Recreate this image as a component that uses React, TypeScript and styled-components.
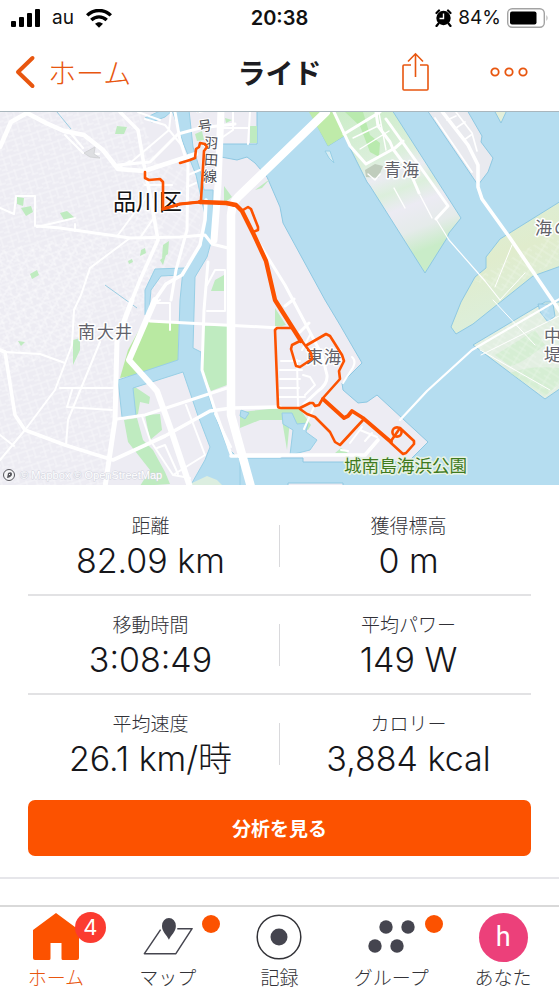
import React from "react";
import styled, { createGlobalStyle } from "styled-components";

const ORANGE = "#fc5200";
const LINK = "#e8560f";
const INK = "#45454f";
const JP = '"Noto Sans CJK JP", sans-serif';

const GlobalStyle = createGlobalStyle`
  * { box-sizing: border-box; }
  body { margin: 0; background: #fff; color: #16161a; font-family: Inter, ${JP}; }
`;

const Screen = styled.div`
  display: flex;
  flex-direction: column;
  min-height: 100vh;
`;

const StatusBar = styled.div`
  display: grid;
  grid-template-columns: 1fr auto 1fr;
  align-items: center;
  height: 36px;
  padding: 0 10px;
  font-size: 19px;
  line-height: 24px;
  color: #111;
`;

const StatusGroup = styled.div<{ $end?: boolean }>`
  display: flex;
  align-items: center;
  justify-content: ${(p) => (p.$end ? "flex-end" : "flex-start")};
  gap: ${(p) => (p.$end ? "6px" : "12px")};
`;

const Clock = styled.time`
  font-weight: 600;
  font-size: 20px;
`;

const Header = styled.header`
  display: grid;
  grid-template-columns: 1fr auto 1fr;
  align-items: center;
  height: 76px;
  padding: 0 14px 4px;
  border-bottom: 1px solid #a9b6bd;
`;

const BackLink = styled.a`
  display: flex;
  align-items: center;
  gap: 12px;
  color: ${LINK};
  font: 300 28px/36px ${JP};
  text-decoration: none;
`;

const Title = styled.h1`
  margin: 0;
  font: 700 28px/36px ${JP};
  color: #1d1d22;
`;

const HeaderActions = styled.div`
  display: flex;
  align-items: center;
  justify-content: flex-end;
  gap: 61px;
  padding-right: 17px;
`;

const IconButton = styled.button`
  display: flex;
  padding: 0;
  border: 0;
  background: none;
  color: ${LINK};
  cursor: pointer;
`;

const MapSvg = styled.svg`
  display: block;
  width: 100%;
  height: auto;
  font-family: ${JP};
`;

const Stats = styled.dl`
  margin: 12px 28px 8px;
`;

const StatRow = styled.div`
  display: grid;
  grid-template-columns: 1fr 1px 1fr;
  column-gap: 6px;
  align-items: center;
  height: 99px;
  border-bottom: 2px solid #e2e2e4;
  &:last-child {
    height: 97px;
    border-bottom: 0;
  }
`;

const StatDivider = styled.span`
  height: 42px;
  background: #d9d9dc;
`;

const Stat = styled.div`
  display: flex;
  flex-direction: column;
  align-items: center;
  gap: 2px;
  padding-top: 4px;
`;

const StatLabel = styled.dt`
  font: 300 19px/24px ${JP};
  color: #303036;
`;

const StatValue = styled.dd`
  margin: 0;
  font: 300 34px/44px Inter, ${JP};
`;

const AnalyzeButton = styled.button`
  height: 56px;
  margin: 0 28px 21px;
  border: 0;
  border-radius: 7px;
  background: ${ORANGE};
  color: #fff;
  font: 700 19px/24px ${JP};
  cursor: pointer;
`;

const Rule = styled.hr`
  width: 100%;
  margin: 0;
  border: 0;
  border-top: 2px solid #e6e6ea;
`;

const TabBar = styled.nav`
  display: grid;
  grid-template-columns: repeat(5, 1fr);
  height: 87px;
  margin-top: auto;
  border-top: 2px solid #d9d9d9;
`;

const Tab = styled.a<{ $active?: boolean }>`
  display: flex;
  flex-direction: column;
  align-items: center;
  gap: 2px;
  padding-top: 5px;
  color: ${(p) => (p.$active ? LINK : "#333338")};
  font: 300 19px/26px ${JP};
  text-decoration: none;
`;

const TabIcon = styled.span`
  position: relative;
  display: flex;
  align-items: center;
  justify-content: center;
  width: 50px;
  height: 50px;
`;

const CountBadge = styled.span`
  position: absolute;
  top: 0;
  right: -25px;
  width: 31px;
  height: 31px;
  border-radius: 50%;
  background: #fb3b30;
  color: #fff;
  text-align: center;
  font: 400 22px/31px Inter, sans-serif;
`;

const DotBadge = styled.span`
  position: absolute;
  top: 3px;
  right: -27px;
  width: 18px;
  height: 18px;
  border-radius: 50%;
  background: ${ORANGE};
`;

const Avatar = styled.span`
  width: 49px;
  height: 49px;
  border-radius: 50%;
  background: #ec407a;
  color: #fff;
  text-align: center;
  font: 400 27px/48px Roboto, sans-serif;
`;

const SignalIcon = () => (
  <svg width="30" height="20" viewBox="0 0 30 20" aria-hidden="true">
    <rect x="1" y="13" width="5" height="6" rx="1" />
    <rect x="9" y="9" width="5" height="10" rx="1" />
    <rect x="17" y="5" width="5" height="14" rx="1" />
    <rect x="25" y="1" width="5" height="18" rx="1" />
  </svg>
);

const WifiIcon = () => (
  <svg width="26" height="19" viewBox="0 0 26 19" fill="none" stroke="#000" strokeWidth="3.4" aria-hidden="true">
    <path d="M1.2 6.4C8-.2 18-.2 24.8 6.4" />
    <path d="M5.3 11c4.5-4.2 10.900-4.200 15.400 0" />
    <path d="M9 14.800c2.500-2.200 5.500-2.200 8 0L13 18.800z" fill="#000" stroke="none" />
  </svg>
);

const AlarmIcon = () => (
  <svg width="17" height="18" viewBox="0 0 17 18" aria-hidden="true">
    <circle cx="8.5" cy="9" r="7.2" />
    <path d="M1.500 4 4 1.500M15.500 4 13 1.500M3.500 14.500 1.500 17M13.500 14.500l2 2.500" stroke="#000" strokeWidth="2.200" strokeLinecap="round" />
    <path d="M8.5 4.500V9.500H4.500" stroke="#fff" strokeWidth="1.400" fill="none" />
  </svg>
);

const BatteryIcon = () => (
  <svg width="42" height="20" viewBox="0 0 42 20" aria-hidden="true">
    <rect x=".7" y=".7" width="36.600" height="18.600" rx="4.500" fill="#fff" stroke="#a3a3a3" strokeWidth="1.400" />
    <rect x="3" y="3.500" width="26.500" height="13" rx="2" />
    <path d="M39.500 7q2 3 0 6z" fill="#a3a3a3" />
  </svg>
);

const BackIcon = () => (
  <svg width="22" height="34" viewBox="0 0 22 34" fill="none" stroke={LINK} strokeWidth="4" strokeLinecap="round" strokeLinejoin="round" aria-hidden="true">
    <path d="M18.500 3 4 17l14.500 14" />
  </svg>
);

const ShareIcon = () => (
  <svg width="27" height="39" viewBox="0 0 27 39" fill="none" stroke={LINK} strokeWidth="1.600" aria-hidden="true">
    <path d="M9 13H2a1 1 0 0 0-1 1v23a1 1 0 0 0 1 1h23a1 1 0 0 0 1-1V14a1 1 0 0 0-1-1h-7M13.500 25V2M6 9.500 13.500 1.800 21 9.500" />
  </svg>
);

const MoreIcon = () => (
  <svg width="38" height="10" viewBox="0 0 38 10" fill="none" stroke={LINK} strokeWidth="1.800" aria-hidden="true">
    <circle cx="5" cy="5" r="3.700" />
    <circle cx="19" cy="5" r="3.700" />
    <circle cx="33" cy="5" r="3.700" />
  </svg>
);

const HomeIcon = () => (
  <svg width="46" height="48" viewBox="0 0 46 48" fill={ORANGE} aria-hidden="true">
    <path d="M23 0 46 17v28q0 2-2 2H30q-1.500 0-1.500-1.500V30h-11v15.500q0 1.500-1.500 1.500H2q-2 0-2-2V17z" />
  </svg>
);

const MapTabIcon = () => (
  <svg width="54" height="42" viewBox="0 0 54 42" fill="none" aria-hidden="true">
    <path d="M19 13 1.500 39h34L53 12H37" stroke={INK} strokeWidth="1.600" strokeLinejoin="round" />
    <path d="M28 24c-2-5-7.500-8.500-7.500-15a7.500 8.500 0 0 1 15 0c0 6.500-5.500 10-7.500 15z" fill={INK} />
  </svg>
);

const RecordIcon = () => (
  <svg width="46" height="46" viewBox="0 0 46 46" aria-hidden="true">
    <circle cx="23" cy="23" r="21.800" fill="none" stroke="#333338" strokeWidth="1.500" />
    <circle cx="23" cy="23" r="8.500" fill={INK} />
  </svg>
);

const GroupsIcon = () => (
  <svg width="48" height="34" viewBox="0 0 48 34" fill={INK} aria-hidden="true">
    <circle cx="19" cy="7" r="6.700" />
    <circle cx="41" cy="7" r="6.700" />
    <circle cx="8" cy="26" r="6.700" />
    <circle cx="30" cy="26" r="6.700" />
  </svg>
);

const RideMap = () => (
  <MapSvg viewBox="0 112 559 373" role="img" aria-label="ライドのルート地図">
    <defs>
      <pattern id="blocks" width="17" height="15" patternUnits="userSpaceOnUse" patternTransform="rotate(-18)">
        <path d="M0 2H17M0 8H10M5 2V15M12 0V11M10 11H17M0 13H5" stroke="#fff" strokeWidth=".8" fill="none" />
      </pattern>
      <pattern id="lots" width="12" height="11" patternUnits="userSpaceOnUse" patternTransform="rotate(32)">
        <path d="M0 2H12M4 0V11M0 8H8" stroke="#fff" strokeWidth=".7" fill="none" />
      </pattern>
      <linearGradient id="aomi" x1="0" y1="0" x2=".35" y2="1">
        <stop offset="0" stopColor="#c9edc5" />
        <stop offset=".42" stopColor="#dcefdc" />
        <stop offset=".52" stopColor="#ebecf2" />
        <stop offset=".62" stopColor="#dcefdc" />
        <stop offset=".73" stopColor="#ecebf3" />
        <stop offset=".87" stopColor="#e5ebea" />
        <stop offset="1" stopColor="#c9ecc8" />
      </linearGradient>
      <linearGradient id="outer" x1="0" y1="0" x2=".3" y2="1">
        <stop offset="0" stopColor="#dcefd8" />
        <stop offset=".5" stopColor="#e0eccd" />
        <stop offset="1" stopColor="#dcefdc" />
      </linearGradient>
    </defs>

    <rect y="112" width="559" height="373" fill="#b5ddf0" />

    <g stroke="#8ec8e2" strokeWidth="1">
      <path d="M-2 110H257V144H221V157L237 160 247 157 255 163 267 177 280 207 283 223 325 300 340 325 362 363 342 383 343 390 358 403 367 402 377 395 428 442 408 462H303V458H240L190 490H-2Z" fill="#edecf3" />
      <path d="M309 110 328 146 344 136 367 182 370 186 425 273 447 238 449 233 461 218 392 110Z" fill="url(#aomi)" />
      <path d="M427 110 478 185 488 172 493 158 481 142 482 136 467 110Z" fill="#e9eaef" />
      <path d="M494 110 501 123 507 110Z" fill="#e3efda" />
      <path d="M561 201 500 239 486 257 486 268 475 277 461 302 451 327 456 334 473 324 533 276 561 266Z" fill="url(#outer)" />
      <path d="M473 345 545 302H561V388L545 399Z" fill="#e3efe2" />
      <path d="M538 304 553 304 555 316 548 322 540 312Z" fill="#b5ddf0" />
      <path d="M288 487V483H343V487Z" fill="#edecf3" />
    </g>

    <g fill="#cdedcb" opacity=".6">
      <path d="M495 355Q520 340 535 330L545 345Q520 365 510 366ZM510 373Q530 365 559 368V384L545 396Z" />
    </g>

    <path d="M0 112H140L160 170 163 230 150 300 115 350 112 440 105 487H0Z" fill="url(#blocks)" opacity=".6" />
    <path d="M140 160 200 170 200 240 150 300 120 310ZM0 250 110 230 90 330 0 380Z" fill="url(#lots)" opacity=".6" />
    <path d="M475 345 545 303 559 320V386L545 397ZM474 280 559 230V260L500 292Z" fill="url(#lots)" opacity=".4" />

    <g fill="#bfebc0">
      <path d="M117 126 127 127 124 134 115 134ZM17 197 24 198 23 206 17 204ZM21 208 31 206 33 212 26 216ZM60 213 67 211 75 218 64 220ZM30 274 37 270 39 275 32 279ZM141 250 145 248 146 253 140 256ZM163 245 169 241 168 254 162 258ZM160 260 166 255 163 265ZM128 261 132 259 133 262 129 264Z" />
      <path d="M195 134 202 131 204 140 197 141ZM224 186 232 197 224 203ZM255 190 270 179 262 188ZM215 280 224 275 224 291 211 291Z" />
      <path d="M250 126H257V143H250ZM225 118 232 120 226 123ZM73 340 80 338 80 350 73 365ZM18 341 25 342 21 346ZM275 308 286 325 275 328Z" />
      <path d="M203 326 227 325V385L211 391 202 372Z" />
      <path d="M132 385 150 397 149 404 140 402 138 414 134 417ZM124 420 137 418 143 440 153 450 165 472 170 484 140 486 150 470 128 442ZM145 415 160 414 162 430 150 440Z" />
      <path d="M240 412 280 408 300 409 311 425 308 430 290 420 287 450 282 420 260 420 240 428Z" />
      <path d="M205 482 216 478 222 484ZM335 453 341 448 348 453Z" />
    </g>
    <path d="M144 321 179 322 178 360 140 374 120 378 128 350Z" fill="#b9e9a2" />
    <path d="M309 112 328 146 344 136 334 112Z" fill="#bfeba9" />
    <path d="M345 112 363 112 370 135 380 143 379 157 370 152 360 126Z" fill="#b9eaae" />
    <path d="M365 170 375 164 383 166 378 178 366 177Z" fill="#c0cdbd" />

    <g fill="#b5ddf0" stroke="#98cfe6" strokeWidth="1">
      <path d="M172 110H189L193 147 200 170 204 190H213V235L207 257 195 277 193 348 201 352 202 372 213 410 227 447 240 460V490H188L205 460 210 447 197 413 183 372 133 388 136 416 122 417 118 380 178 360 180 300 183 270 202 243 205 215 196 175 184 145Z" />
      <path d="M145 118 160 111H172L165 117 152 122Z" />
      <path d="M145 315 145 290 155 269 184 268 182 275 161 276 151 290 149 312Z" />
      <path d="M282 413 292 413 297 424 308 423 306 432 317 440 310 450 290 455 293 430 283 424Z" />
      <path d="M241 410 249 413 245 419 240 416Z" />
      <path d="M325 151 330 151 334 163 329 158Z" fill="#d8edf3" />
    </g>
    <path d="M192 487V483L207 476 217 480 224 487Z" fill="#dceee0" />
    <path d="M57 112 71 129M105 285 137 308" stroke="#9bcde2" fill="none" />

    <g fill="none" stroke="#fff" strokeLinejoin="round" strokeLinecap="round">
      <path d="M326 112 238 197Q232 203 231 215V415L251 487" strokeWidth="8.5" />
      <path d="M221 110 218 185 214 240" strokeWidth="7" />
      <path d="M0 147 11 122 27 113 46 123 64 131 84 135 103 150 118 169 144 171 196 154" strokeWidth="4.5" />
      <path d="M155 300 129 360 157 391 171 430 190 487" strokeWidth="6" />
      <path d="M132 300 117 340 115 420 105 487" strokeWidth="5" />
      <g strokeWidth="3.6">
        <path d="M120 112 138 130 144 165 151 200 158 240 140 280 130 305" />
        <path d="M118 165 150 162 178 134 200 128 235 124M175 112 180 140 188 165 187 230 176 270 171 300" strokeWidth="3" />
        <path d="M37 226 60 228 130 238 180 237 205 235 212 244 228 248" strokeWidth="3" />
        <path d="M155 300 166 284 182 275 200 245 205 220 206 200" />
        <path d="M0 350 5 352 15 415 25 430 65 445 113 460 165 436 210 411 232 408 280 407" />
        <path d="M117 419 145 415 230 387M150 321 280 328" strokeWidth="3" />
        <path d="M240 455H365L378 440M231 456H280" />
        <path d="M208 262 204 310 202 370 215 410 231 454" strokeWidth="3" />
      </g>
      <g strokeWidth="2">
        <path d="M0 208 14 214 16 196H35V226M37 227 75 218M75 224V231M65 135 83 153 99 154M68 130 83 148" />
        <path d="M130 238 90 268 81 295 74 310 72 345 55 390 25 430 0 460M0 435 14 446M5 352 40 354 65 363M60 388H113M100 342 68 420 66 445M72 390 67 407 112 410" />
        <path d="M120 167 130 161M118 235 150 192M140 238 153 219M145 185H172M160 120 138 112M145 119 165 125 183 147M171 112 169 130 130 163" />
        <path d="M187 187 196 183M200 170 188 175M204 150 233 130V112M250 112 248 144M220 128H248M232 240V210" />
        <path d="M142 416 150 440 173 475 190 478M157 448 165 445 178 474M186 405 205 455 173 475M215 414 231 447M160 300 155 303H170V330M207 311H225V270H215L207 285" />
        <path d="M280 370H302M280 379H300M280 388H299M279 397H305M281 361H300M297 360 298 407M310 335 302 350M303 375 310 377 315 385 305 395" />
        <path d="M252 232 285 285 322 355 327 375Q328 384 318 391L304 404M285 306 294 299M300 332 309 323" strokeWidth="3" />
        <path d="M314 407 304 429M360 430 377 437M362 427 350 443M341 450 348 451M352 357Q358 362 350 372L343 383M372 433 365 441" />
      </g>
      <path d="M334 112 350 146 366 164 395 148 403 141M344 134 380 112M376 112 378 126 390 142 393 149 410 172 419 193M386 119 448 206 436 219" strokeWidth="3" />
      <path d="M379 113 386 150M353 138 380 125M360 149 389 131M368 174 375 180 380 174M394 188 405 208M420 195 432 218" strokeWidth="1.4" />
      <path d="M441 110 468 145 478 165 478 187 482 199 510 238 561 313" strokeWidth="3.6" />
      <path d="M456 112 472 133 477 151M447 120 456 116M456 128 465 122M464 140 471 135M435 118 472 172" strokeWidth="1.7" />
      <path d="M400 420 427 391 472 350 561 298" strokeWidth="2.2" />
      <path d="M436 219 449 240 485 281 500 300" strokeWidth="1.2" />
      <path d="M495 287 512 245M500 300 525 273M481 355 561 315M493 300 535 345M480 350 550 390" strokeWidth="1" />
    </g>

    <path d="M84 153 95 147 94 154 100 158 90 157Z" stroke="#d3d4d7" fill="#dedfe2" />

    <g fill="#62626a" stroke="#fff" strokeWidth="3" strokeLinejoin="round" paintOrder="stroke">
      <text x="113" y="210" fontSize="23" fill="#121212">品川区</text>
      <g fontSize="17">
        <text x="78" y="338">南</text>
        <text x="97" y="338">大</text>
        <text x="115" y="338">井</text>
        <text x="384" y="176">青</text>
        <text x="402" y="176">海</text>
        <text x="306" y="363">東</text>
        <text x="324" y="363">海</text>
        <text x="535" y="234">海</text>
        <text x="554" y="234">の</text>
        <text x="544" y="342">中</text>
        <text x="544" y="361">堤</text>
      </g>
      <g fontSize="14" fill="#4d4d53" strokeWidth="2">
        <text x="197" y="116" transform="rotate(-12 203 112)">一</text>
        <text x="198" y="131" transform="rotate(-8 206 127)">号</text>
        <text x="204" y="148" transform="rotate(6 210 143)">羽</text>
        <text x="204" y="165" transform="rotate(4 210 160)">田</text>
        <text x="203" y="181">線</text>
      </g>
      <text x="344" y="472" fontSize="17.6" fill="#3f7a1e" stroke="#e8f3e4">城南島海浜公園</text>
    </g>

    <g fill="none" stroke={ORANGE} strokeWidth="2.6" strokeLinejoin="round" strokeLinecap="round">
      <path d="M145 172V178L149 180 160 179 163 182V209L180 204 200 202 226 203 236 206" />
      <path d="M180 163 190 160 195 158 196 149 199 147 200 143 205 144 207 147 204 151 201 200" />
      <path d="M163 209 180 204 200 202" strokeWidth="3.2" />
      <path d="M200 202 226 203 236 205 242 211 254 235 266 261 275 300 294 330 301 341" strokeWidth="4.4" />
      <path d="M243 210 248 207 251 209 258 227 258 230 253 232" />
      <path d="M292 328H277L275 330 278 406Q278 408 281 408H300L310 403 313 403 315 406 319 405 323 398 340 379 339 371 344 361 342 355 330 336 326 334 307 345" />
      <path d="M300 341 292 345 291 349 296 366 300 367 312 359 311 353 301 340" />
      <path d="M300 409 307 414 315 417 330 432 335 442 340 445 363 420" />
      <path d="M323 399 344 418 348 416 352 411 363 418 391 442" strokeWidth="3.8" />
      <path d="M391 443 403 454 406 453 414 444 414 441 400 428 391 441" />
      <circle cx="397" cy="432" r="4.6" />
    </g>

    <circle cx="9" cy="475" r="5.5" fill="#f6f6f8" stroke="#56565c" />
    <path d="M7 478 8 473Q12 471 12 474T7 478Z" fill="#56565c" />
    <path d="M10 474l-1 1" stroke="#fff" />
    <text x="20" y="479" fontSize="11" fontFamily="Liberation Sans" fill="#fff" stroke="#d3d5df" strokeWidth="1" paintOrder="stroke">© Mapbox © OpenStreetMap</text>
  </MapSvg>
);

const stats = [
  [["距離", "82.09 km"], ["獲得標高", "0 m"]],
  [["移動時間", "3:08:49"], ["平均パワー", "149 W"]],
  [["平均速度", "26.1 km/時"], ["カロリー", "3,884 kcal"]],
];

const StatCell = ({ label, value }: { label: string; value: string }) => (
  <Stat>
    <StatLabel>{label}</StatLabel>
    <StatValue>{value}</StatValue>
  </Stat>
);

export default function App() {
  return (
    <Screen>
      <GlobalStyle />
      <StatusBar>
        <StatusGroup>
          <SignalIcon />
          <span>au</span>
          <WifiIcon />
        </StatusGroup>
        <Clock>20:38</Clock>
        <StatusGroup $end>
          <AlarmIcon />
          <span>84%</span>
          <BatteryIcon />
        </StatusGroup>
      </StatusBar>
      <Header>
        <BackLink href="#home">
          <BackIcon />
          ホーム
        </BackLink>
        <Title>ライド</Title>
        <HeaderActions>
          <IconButton type="button" aria-label="共有">
            <ShareIcon />
          </IconButton>
          <IconButton type="button" aria-label="その他">
            <MoreIcon />
          </IconButton>
        </HeaderActions>
      </Header>
      <RideMap />
      <Stats>
        {stats.map(([left, right]) => (
          <StatRow key={left[0]}>
            <StatCell label={left[0]} value={left[1]} />
            <StatDivider />
            <StatCell label={right[0]} value={right[1]} />
          </StatRow>
        ))}
      </Stats>
      <AnalyzeButton type="button">分析を見る</AnalyzeButton>
      <Rule />
      <TabBar>
        <Tab href="#home" $active aria-current="page">
          <TabIcon>
            <HomeIcon />
            <CountBadge>4</CountBadge>
          </TabIcon>
          ホーム
        </Tab>
        <Tab href="#maps">
          <TabIcon>
            <MapTabIcon />
            <DotBadge />
          </TabIcon>
          マップ
        </Tab>
        <Tab href="#record">
          <TabIcon>
            <RecordIcon />
          </TabIcon>
          記録
        </Tab>
        <Tab href="#groups">
          <TabIcon>
            <GroupsIcon />
            <DotBadge />
          </TabIcon>
          グループ
        </Tab>
        <Tab href="#you">
          <TabIcon>
            <Avatar>h</Avatar>
          </TabIcon>
          あなた
        </Tab>
      </TabBar>
    </Screen>
  );
}
